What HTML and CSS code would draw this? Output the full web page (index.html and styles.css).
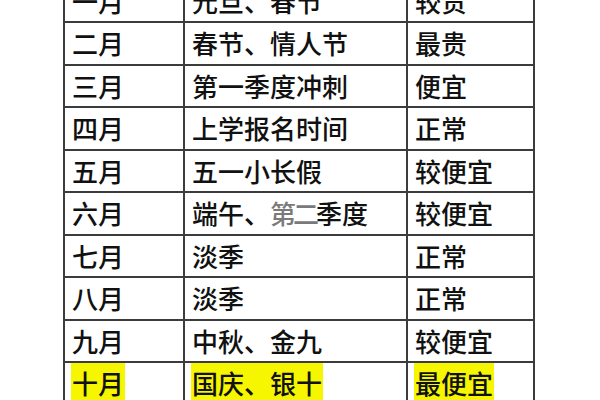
FILE: index.html
```html
<!DOCTYPE html>
<html lang="zh">
<head>
<meta charset="utf-8">
<link rel="stylesheet" href="styles.css">
</head>
<body>
<div class="page">
<table class="price">
<tr><td class="c1">一月</td><td class="c2">元旦、春节</td><td class="c3">较贵</td></tr>
<tr><td class="c1">二月</td><td class="c2">春节、情人节</td><td class="c3">最贵</td></tr>
<tr><td class="c1">三月</td><td class="c2">第一季度冲刺</td><td class="c3">便宜</td></tr>
<tr><td class="c1">四月</td><td class="c2">上学报名时间</td><td class="c3">正常</td></tr>
<tr><td class="c1">五月</td><td class="c2">五一小长假</td><td class="c3">较便宜</td></tr>
<tr><td class="c1">六月</td><td class="c2">端午、<span class="wm">第二</span>季度</td><td class="c3">较便宜</td></tr>
<tr><td class="c1">七月</td><td class="c2">淡季</td><td class="c3">正常</td></tr>
<tr><td class="c1">八月</td><td class="c2">淡季</td><td class="c3">正常</td></tr>
<tr><td class="c1">九月</td><td class="c2">中秋、金九</td><td class="c3">较便宜</td></tr>
<tr><td class="c1"><span class="hl">十月</span></td><td class="c2"><span class="hl">国庆、银十</span></td><td class="c3"><span class="hl">最便宜</span></td></tr>
</table>
</div>
</body>
</html>
```
FILE: styles.css
```css
html, body {
  margin: 0;
  padding: 0;
  background: #ffffff;
}
.page {
  width: 600px;
  height: 400px;
  overflow: hidden;
  padding-left: 63px;
  box-sizing: border-box;
}
.price {
  border-collapse: collapse;
  margin-top: -21.5px;
  font-family: "Noto Sans CJK SC", "Noto Sans", sans-serif;
  font-size: 26px;
  font-weight: 500;
  color: #111111;
  table-layout: fixed;
}
.price td {
  border: 2px solid #3c3c3c;
  height: 40.5px;
  padding: 0 0 0 7px;
  line-height: 30px;
  vertical-align: middle;
  white-space: nowrap;
}
.c1 { width: 111px; }
.c2 { width: 214px; padding-left: 8px; }
.c3 { width: 118px; }
.hl {
  background: #f6f600;
  padding: 1px 1px 3px;
  margin-left: -1px;
}
.wm {
  color: #7a7a7a;
  letter-spacing: -3px;
}
```
